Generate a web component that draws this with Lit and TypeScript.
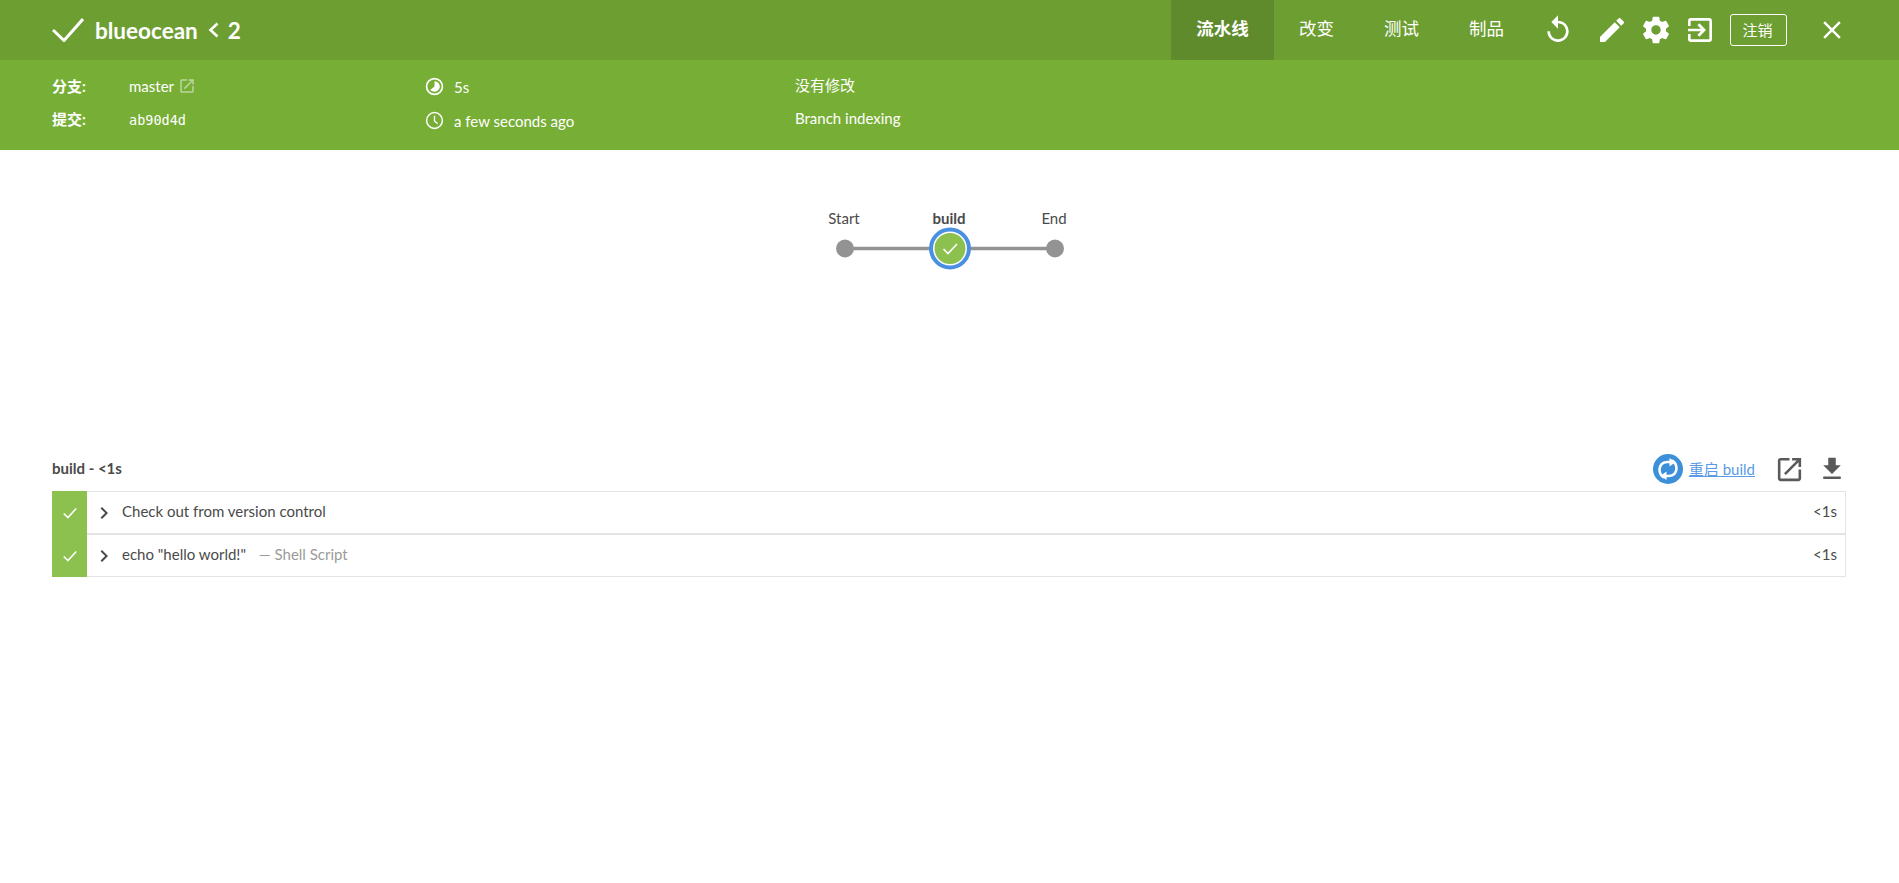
import { LitElement, html, css } from "lit";
import { customElement } from "lit/decorators.js";

const P = {
  replay: "M12 5V1L7 6l5 5V7c3.31 0 6 2.69 6 6s-2.69 6-6 6-6-2.69-6-6H4c0 4.42 3.58 8 8 8s8-3.58 8-8-3.58-8-8-8z",
  edit: "M3 17.25V21h3.75L17.81 9.94l-3.75-3.75L3 17.25zM20.71 7.04c.39-.39.39-1.02 0-1.41l-2.34-2.34c-.39-.39-1.02-.39-1.41 0l-1.83 1.83 3.75 3.75 1.83-1.83z",
  gear: "M19.43 12.98c.04-.32.07-.64.07-.98s-.03-.66-.07-.98l2.11-1.65c.19-.15.24-.42.12-.64l-2-3.46c-.12-.22-.39-.3-.61-.22l-2.49 1c-.52-.4-1.08-.73-1.69-.98l-.38-2.65C14.46 2.18 14.25 2 14 2h-4c-.25 0-.46.18-.49.42l-.38 2.65c-.61.25-1.17.59-1.69.98l-2.49-1c-.23-.09-.49 0-.61.22l-2 3.46c-.13.22-.07.49.12.64l2.11 1.65c-.04.32-.07.65-.07.98s.03.66.07.98l-2.11 1.65c-.19.15-.24.42-.12.64l2 3.46c.12.22.39.3.61.22l2.49-1c.52.4 1.08.73 1.69.98l.38 2.65c.03.24.24.42.49.42h4c.25 0 .46-.18.49-.42l.38-2.65c.61-.25 1.17-.59 1.69-.98l2.49 1c.23.09.49 0 .61-.22l2-3.46c.12-.22.07-.49-.12-.64l-2.11-1.65zM12 15.5c-1.93 0-3.5-1.57-3.5-3.5s1.57-3.5 3.5-3.5 3.5 1.57 3.5 3.5-1.57 3.5-3.5 3.5z",
  exit: "M10.09 15.59L11.5 17l5-5-5-5-1.41 1.41L12.67 11H3v2h9.67l-2.58 2.59zM19 3H5c-1.11 0-2 .9-2 2v4h2V5h14v14H5v-4H3v4c0 1.1.89 2 2 2h14c1.1 0 2-.9 2-2V5c0-1.1-.9-2-2-2z",
  close: "M19 6.41L17.59 5 12 10.59 6.41 5 5 6.41 10.59 12 5 17.59 6.41 19 12 13.41 17.59 19 19 17.59 13.41 12z",
  open: "M19 19H5V5h7V3H5c-1.11 0-2 .9-2 2v14c0 1.1.89 2 2 2h14c1.1 0 2-.9 2-2v-7h-2v7zM14 3v2h3.59l-9.83 9.83 1.41 1.41L19 6.41V10h2V3h-7z",
  download: "M19 9h-4V3H9v6H5l7 7 7-7zM5 18v2h14v-2H5z",
  chevron: "M10 6L8.59 7.41 13.17 12l-4.58 4.59L10 18l6-6z",
};

const icon = (d: string, size: number, cls = "") =>
  html`<svg class="icon ${cls}" width=${size} height=${size} viewBox="0 0 24 24"><path d=${d}></path></svg>`;

const tick = (size: number) =>
  html`<svg class="tick" width=${size} height=${size} viewBox="0 0 24 24"><path d="M4.5 12.5l5 5L19.5 6.5" fill="none" stroke="#fff" stroke-width="1.8"></path></svg>`;

@customElement("app-root")
export class AppRoot extends LitElement {
  static styles = css`
    :host { display: block; min-height: 883px; background: #fff; font-family: Lato, "Noto Sans CJK SC", sans-serif; color: #4a4a4a; font-size: 15px; }
    .icon { fill: currentColor; display: block; flex: none; }
    .top { height: 60px; background: #6d9e31; color: #fff; display: flex; align-items: center; padding-left: 52px; }
    .title { display: flex; align-items: center; font-size: 22.5px; font-weight: 700; flex: 1; }
    .mark { display: block; margin-right: 11px; }
    .sep { margin: 0 9px 0 10px; display: block; }
    .tabs { display: flex; align-self: stretch; }
    .tab { width: 85px; display: flex; align-items: center; justify-content: center; font-size: 17.5px; padding-bottom: 5px; box-sizing: border-box; }
    .tab.on { width: 103px; background: #5f8b2c; font-weight: 700; }
    .actions { display: flex; align-items: center; margin-left: 13px; margin-right: 52px; }
    .replay { margin-right: 22px; }
    .pencil, .gear { margin-right: 12px; }
    .exit { margin-right: 14px; }
    .logout { width: 57px; height: 32px; box-sizing: border-box; border: 1px solid #fff; border-radius: 3px; display: flex; align-items: center; justify-content: center; font-size: 15px; padding: 0 2px 1px 0; margin-right: 30px; }
    .sub { height: 90px; box-sizing: border-box; padding: 0 0 5px 52px; background: #77ae36; color: #fff; display: grid; grid-template-columns: 373px 371px 1fr; grid-template-rows: 34px 34px; align-content: center; }
    .cell { display: flex; align-items: center; }
    .mid { padding-top: 2px; }
    .last { padding: 0 0 3px 0; margin-left: -1px; }
    .label { width: 77px; font-weight: 700; }
    .up { padding-bottom: 2px; }
    .mono { font-family: "DejaVu Sans Mono", monospace; font-size: 13.5px; padding-top: 2px; }
    .ext { margin-left: 4px; opacity: .5; }
    .time-ic { margin-right: 10px; }
    .graph { display: block; margin: 0 auto; }
    .graph-wrap { height: 297px; }
    .graph text { font-family: Lato, sans-serif; font-size: 15px; fill: #4a4a4a; text-anchor: middle; }
    .graph text.b { font-weight: 700; }
    .steps { padding: 0 53px 0 52px; }
    .head { height: 44px; display: flex; align-items: center; justify-content: space-between; font-weight: 700; }
    .head-t { padding-bottom: 2px; }
    .tools { display: flex; align-items: center; color: #5a5a5a; margin-right: -1px; }
    .restart { display: block; margin-right: 6px; }
    .link { color: #5a9ae6; font-weight: 400; text-decoration: underline; margin-right: 19px; padding-bottom: 2px; }
    .dl { margin-left: 12px; }
    .row { display: flex; height: 43px; border: solid #e4e4e4; border-width: 1px 1px 1px 0; box-sizing: border-box; align-items: center; }
    .st { width: 35px; align-self: stretch; margin: -1px 0; background: #8cc04f; display: flex; align-items: center; justify-content: center; }
    .chev { margin: 0 6px 0 5px; color: #4a4a4a; }
    .name { flex: 1; padding-bottom: 4px; }
    .muted { color: #9b9b9b; margin-left: 9px; }
    .dur { margin-right: 8px; padding-bottom: 4px; }
  `;

  render() {
    return html`
      <div class="top">
        <div class="title">
          <svg class="mark" width="32" height="24" viewBox="0 0 32 24"><path d="M1 12L12 22.5 31 1" fill="none" stroke="#fff" stroke-width="3"></path></svg>
          <span>blueocean</span>
          <svg class="sep" width="11" height="16" viewBox="0 0 11 16"><path d="M9.5 1.5L2.5 8l7 6.5" fill="none" stroke="#fff" stroke-width="2.6"></path></svg>
          <span>2</span></div>
        <div class="tabs">
          <div class="tab on">流水线</div><div class="tab">改变</div><div class="tab">测试</div><div class="tab">制品</div>
        </div>
        <div class="actions">
          ${icon(P.replay, 32, "replay")}${icon(P.edit, 32, "pencil")}${icon(P.gear, 32, "gear")}${icon(P.exit, 32, "exit")}
          <div class="logout">注销</div>
          ${icon(P.close, 30)}
        </div>
      </div>
      <div class="sub">
        <div class="cell"><span class="label">分支:</span><span>master</span>${icon(P.open, 18, "ext")}</div>
        <div class="cell mid">
          <svg class="time-ic" width="19" height="19" viewBox="0 0 18 18"><circle cx="9" cy="9" r="7.5" fill="none" stroke="#fff" stroke-width="1.6"></circle><path d="M9 4v5l-4 3a5 5 0 1 0 4-8z" fill="#fff"></path></svg>
          <span>5s</span></div>
        <div class="cell last">没有修改</div>
        <div class="cell up"><span class="label">提交:</span><span class="mono">ab90d4d</span></div>
        <div class="cell mid">
          <svg class="time-ic" width="19" height="19" viewBox="0 0 18 18"><circle cx="9" cy="9" r="7.5" fill="none" stroke="#fff" stroke-width="1.4"></circle><path d="M9 4.5V9.5l3 2.5" fill="none" stroke="#fff" stroke-width="1.3"></path></svg>
          <span>a few seconds ago</span></div>
        <div class="cell last">Branch indexing</div>
      </div>
      <div class="graph-wrap">
        <svg class="graph" width="300" height="140" viewBox="800 150 300 140">
          <text x="844" y="224">Start</text>
          <text x="949" y="224" class="b">build</text>
          <text x="1054" y="224">End</text>
          <line x1="845" y1="248.5" x2="1055" y2="248.5" stroke="#949393" stroke-width="3.6"></line>
          <circle cx="845" cy="248.5" r="9" fill="#949393"></circle>
          <circle cx="1055" cy="248.5" r="9" fill="#949393"></circle>
          <circle cx="950" cy="248.5" r="19" fill="#fff" stroke="#4a90e2" stroke-width="4"></circle>
          <circle cx="950" cy="248.5" r="15.5" fill="#8cc04f"></circle>
          <path d="M943.5 249l4.5 4.5 9-9.5" fill="none" stroke="#fff" stroke-width="1.6"></path>
        </svg>
      </div>
      <div class="steps">
        <div class="head"><span class="head-t">build - &lt;1s</span>
          <div class="tools">
            <svg class="restart" width="30" height="30" viewBox="0 0 30 30"><circle cx="15" cy="15" r="15" fill="#3c90d9"></circle>
              <g fill="none" stroke="#fff" stroke-width="2.6">
                <path d="M11 23.5Q6.5 21 6.5 15.5 7 8.5 14 8H18"></path>
                <path d="M19 6.5Q23.5 9 23.5 14.5 23 21.5 16 22H12"></path>
              </g>
              <path d="M16.5 4l6 4.2-6 4.2zM13.5 26l-6-4.2 6-4.2z" fill="#fff"></path></svg>
            <span class="link">重启 build</span>
            ${icon(P.open, 31)}
            ${icon(P.download, 30, "dl")}
          </div>
        </div>
        <div class="row"><div class="st">${tick(20)}</div>${icon(P.chevron, 24, "chev")}<span class="name">Check out from version control</span><span class="dur">&lt;1s</span></div>
        <div class="row"><div class="st">${tick(20)}</div>${icon(P.chevron, 24, "chev")}<span class="name">echo "hello world!" <span class="muted">— Shell Script</span></span><span class="dur">&lt;1s</span></div>
      </div>
    `;
  }
}
